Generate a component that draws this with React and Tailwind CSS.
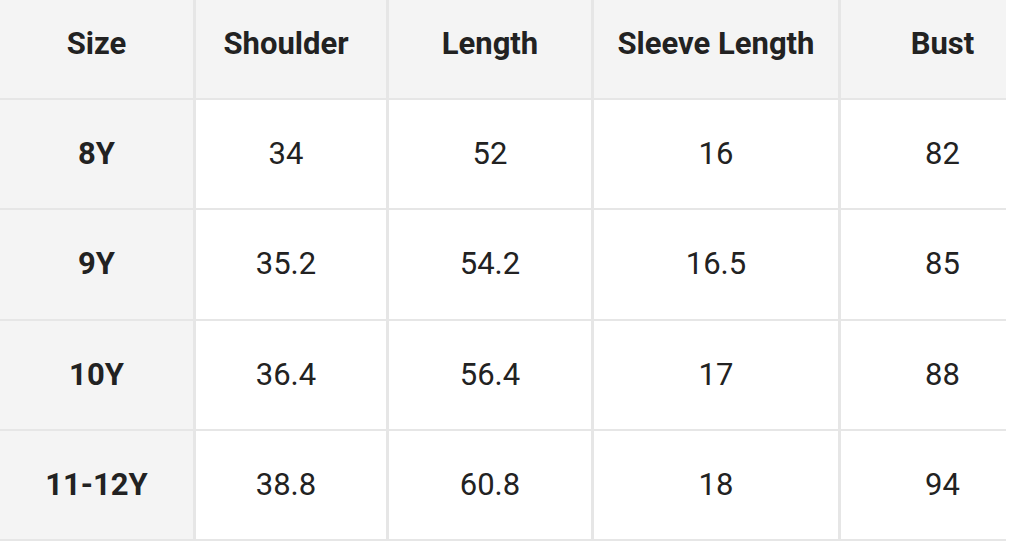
export default function App() {
    const headers = ['Size', 'Shoulder', 'Length', 'Sleeve Length', 'Bust'];
    const rows = [
        ['8Y', '34', '52', '16', '82'],
        ['9Y', '35.2', '54.2', '16.5', '85'],
        ['10Y', '36.4', '56.4', '17', '88'],
        ['11-12Y', '38.8', '60.8', '18', '94'],
    ];

    // per-column text nudges so labels sit where the screenshot has them
    const pads = ['', 'pr-[10px]', '', '', 'pl-[38px]'];

    return (
        <div className="w-[1025px] h-[543px] bg-white overflow-hidden font-['Roboto',sans-serif] text-[#222]">
            <div className="w-[1006px] grid grid-cols-[193px_190px_202px_244px_165px] grid-rows-[98px_108px_109px_108px_108px] gap-x-[3px] gap-y-[2px] bg-[#e6e6e6] pb-[2px]">
                {headers.map((h, i) => (
                    <div key={h} className={`bg-[#f4f4f4] flex items-center justify-center pb-[10px] text-[31px] font-bold ${pads[i]}`}>
                        {h}
                    </div>
                ))}
                {rows.map((r) =>
                    r.map((cell, i) => (
                        <div
                            key={r[0] + i}
                            className={`flex items-center justify-center text-[31px] ${pads[i]} ${i === 0 ? 'bg-[#f4f4f4] font-bold' : 'bg-white'}`}
                        >
                            {cell}
                        </div>
                    ))
                )}
            </div>
        </div>
    );
}
